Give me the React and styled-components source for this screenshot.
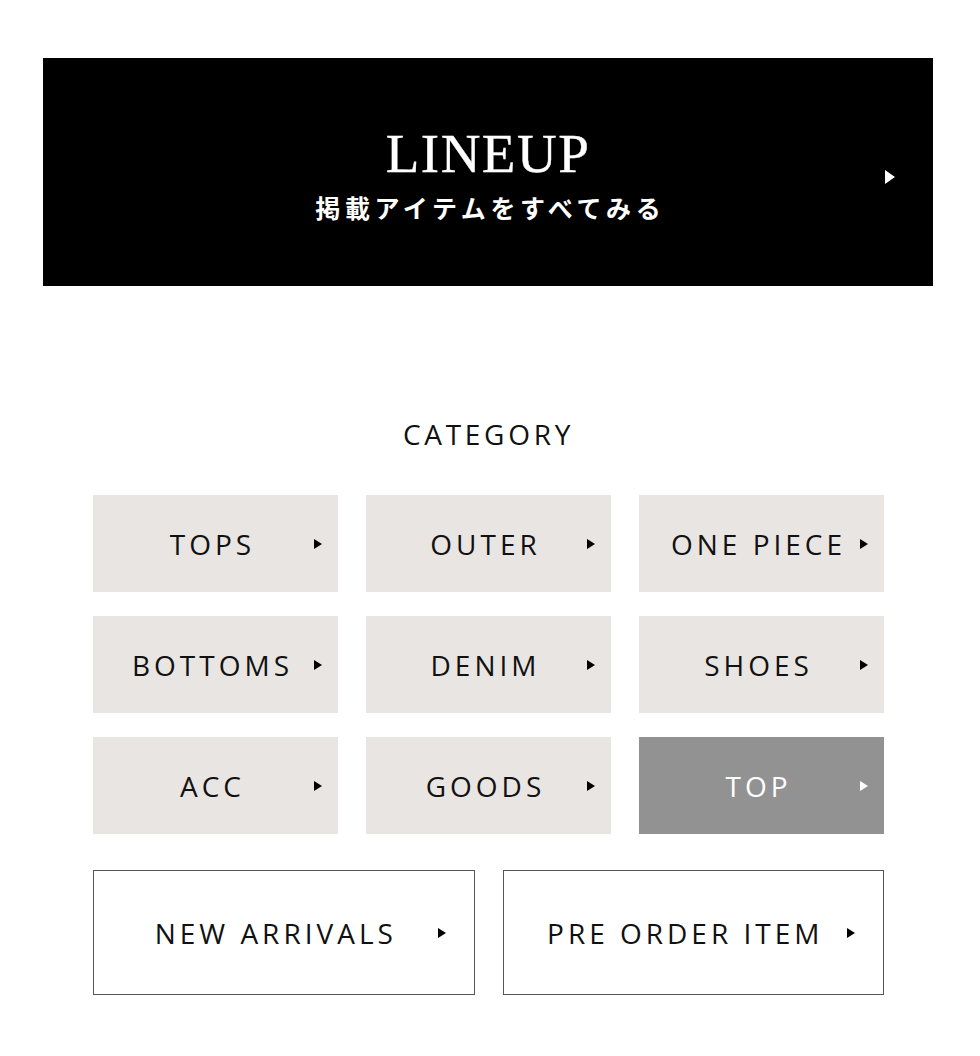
import React from "react";
import styled, { createGlobalStyle } from "styled-components";

const GlobalStyle = createGlobalStyle`
  body {
    margin: 0;
    background: #fff;
    font-family: "Open Sans", "Noto Sans CJK JP", sans-serif;
    color: #111;
  }
`;

const Page = styled.div`
  padding: 58px 47px 60px 43px;
`;

const Banner = styled.a`
  position: relative;
  display: flex;
  flex-direction: column;
  align-items: center;
  justify-content: center;
  height: 228px;
  background: #000;
  color: #fff;
  text-decoration: none;
`;

const BannerTitle = styled.div`
  font-family: "Liberation Serif", "Times New Roman", serif;
  font-size: 55px;
  line-height: 1;
  letter-spacing: 1.5px;
  margin-top: 2px;
  -webkit-text-stroke: 0.4px #fff;
`;

const BannerSub = styled.div`
  font-family: "Noto Sans CJK JP", sans-serif;
  font-size: 25px;
  font-weight: 700;
  letter-spacing: 4.6px;
  line-height: 1;
  margin-top: 14px;
  margin-right: -4.6px;
`;

const Arrow = styled.span`
  display: block;
  width: 0;
  height: 0;
  border-top: ${(p) => p.$h / 2}px solid transparent;
  border-bottom: ${(p) => p.$h / 2}px solid transparent;
  border-left: ${(p) => p.$w}px solid ${(p) => p.$color || "#000"};
`;

const BannerArrow = styled.div`
  position: absolute;
  right: 38px;
  top: calc(50% + 5px);
  transform: translateY(-50%);
`;

const Section = styled.section`
  margin: 0 49px 0 50px;
  padding-top: 134px;
`;

const Heading = styled.h2`
  margin: 0 0 47px;
  text-align: center;
  font-weight: 400;
  font-size: 28px;
  line-height: 28px;
  letter-spacing: 3.7px;
  color: #111;
`;

const Grid = styled.div`
  display: grid;
  grid-template-columns: repeat(3, 1fr);
  column-gap: 28px;
  row-gap: 24px;
`;

const Tile = styled.a`
  position: relative;
  display: flex;
  align-items: center;
  justify-content: center;
  height: 97px;
  padding-right: 6px;
  background: ${(p) => (p.$active ? "#939292" : "#e9e5e2")};
  color: ${(p) => (p.$active ? "#fff" : "#111")};
  font-size: 28px;
  letter-spacing: 4px;
  text-decoration: none;
`;

const TileArrow = styled.div`
  position: absolute;
  right: 16px;
  top: 50%;
  transform: translateY(-50%);
`;

const Links = styled.div`
  display: grid;
  grid-template-columns: 1fr 1fr;
  column-gap: 28px;
  margin-top: 36px;
`;

const LinkBox = styled.a`
  position: relative;
  display: flex;
  align-items: center;
  justify-content: center;
  height: 125px;
  box-sizing: border-box;
  padding-right: 16px;
  border: 1px solid #555;
  color: #111;
  font-size: 28px;
  letter-spacing: 4px;
  text-decoration: none;
`;

const LinkArrow = styled.div`
  position: absolute;
  right: 28px;
  top: 50%;
  transform: translateY(-50%);
`;

const categories = [
  "TOPS",
  "OUTER",
  "ONE PIECE",
  "BOTTOMS",
  "DENIM",
  "SHOES",
  "ACC",
  "GOODS",
  "TOP",
];

export default function App() {
  return (
    <Page>
      <GlobalStyle />
      <Banner href="#">
        <BannerTitle>LINEUP</BannerTitle>
        <BannerSub>掲載アイテムをすべてみる</BannerSub>
        <BannerArrow>
          <Arrow $w={10} $h={15} $color="#fff" />
        </BannerArrow>
      </Banner>

      <Section>
        <Heading>CATEGORY</Heading>
        <Grid>
          {categories.map((name) => (
            <Tile href="#" key={name} $active={name === "TOP"}>
              {name}
              <TileArrow>
                <Arrow $w={8} $h={10} $color={name === "TOP" ? "#fff" : "#000"} />
              </TileArrow>
            </Tile>
          ))}
        </Grid>
        <Links>
          <LinkBox href="#">
            NEW ARRIVALS
            <LinkArrow>
              <Arrow $w={8} $h={10} />
            </LinkArrow>
          </LinkBox>
          <LinkBox href="#">
            PRE ORDER ITEM
            <LinkArrow>
              <Arrow $w={8} $h={10} />
            </LinkArrow>
          </LinkBox>
        </Links>
      </Section>
    </Page>
  );
}
